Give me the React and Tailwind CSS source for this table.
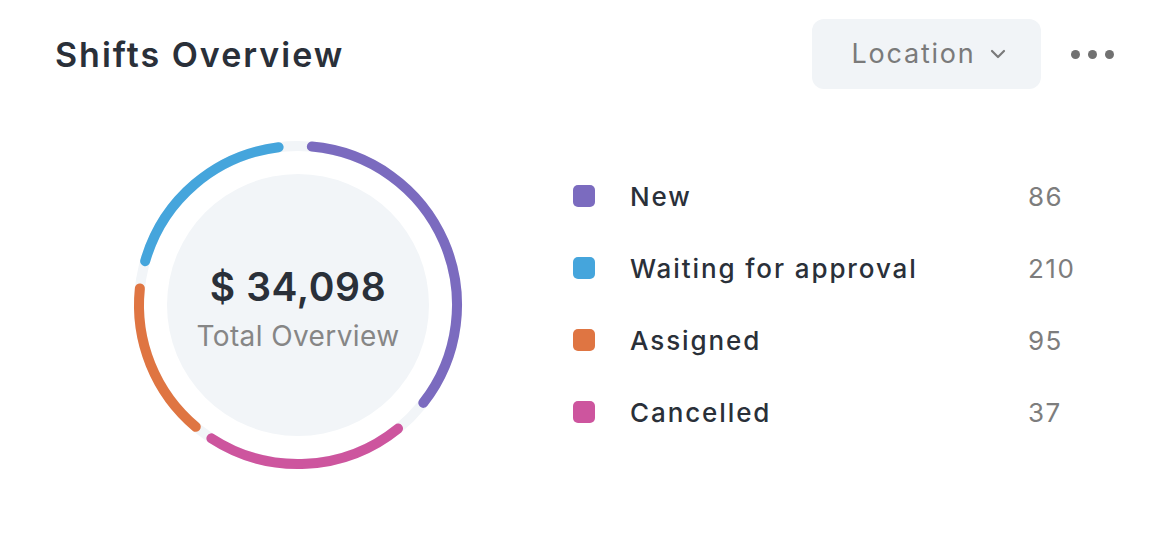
import React from "react";

const segments = [
    { name: "New", value: 86, color: "#7b6bbf", from: 5, to: 128 },
    { name: "Waiting for approval", value: 210, color: "#45a5dc", from: 286, to: 353 },
    { name: "Assigned", value: 95, color: "#df7542", from: 220, to: 276 },
    { name: "Cancelled", value: 37, color: "#cd559e", from: 141, to: 213 },
];

const arcPath = (cx, cy, r, from, to) => {
    const rad = (a) => (a * Math.PI) / 180;
    const x1 = cx + r * Math.sin(rad(from));
    const y1 = cy - r * Math.cos(rad(from));
    const x2 = cx + r * Math.sin(rad(to));
    const y2 = cy - r * Math.cos(rad(to));
    const large = to - from > 180 ? 1 : 0;
    return `M ${x1} ${y1} A ${r} ${r} 0 ${large} 1 ${x2} ${y2}`;
};

const Donut = () => (
    <div className="relative w-[340px] h-[340px] shrink-0">
        <svg width="340" height="340" viewBox="0 0 340 340">
            <circle cx="170" cy="170" r="159" fill="none" stroke="#f2f5f8" strokeWidth="10" />
            <circle cx="170" cy="170" r="131" fill="#f2f5f8" />
            {segments.map((s) => (
                <path key={s.name} d={arcPath(170, 170, 159, s.from, s.to)} fill="none" stroke={s.color} strokeWidth="10" strokeLinecap="round" />
            ))}
        </svg>
        <div className="absolute inset-0 flex flex-col items-center justify-center">
            <p className="text-[39px] leading-[44px] font-semibold text-[#2a3039] tracking-[0.6px] mt-[8px]">$ 34,098</p>
            <p className="text-[28px] leading-[34px] text-[#868686] mt-[10px] tracking-[0.4px]">Total Overview</p>
        </div>
    </div>
);

export default function App() {
    return (
        <div className="w-full h-[540px] bg-white" style={{ fontFamily: "Inter, 'Noto Sans', sans-serif" }}>
            <div className="flex items-center justify-between pl-[55px] pr-[58px] pt-[19px]">
                <h1 className="text-[34px] font-semibold text-[#2a3039] tracking-[2px]">Shifts Overview</h1>
                <div className="flex items-center gap-[30px]">
                    <button className="h-[70px] w-[229px] rounded-[12px] bg-[#f1f4f7] flex items-center justify-center gap-[14px] pl-[4px] text-[27px] text-[#7a7a7a] tracking-[1.8px]">
                        Location
                        <svg width="16" height="10" viewBox="0 0 16 10" fill="none">
                            <path d="M2 2l6 6 6-6" stroke="#7a7a7a" strokeWidth="2.2" strokeLinecap="round" strokeLinejoin="round" />
                        </svg>
                    </button>
                    <div className="flex items-center gap-[8px]">
                        <span className="w-[9px] h-[9px] rounded-full bg-[#717171]" />
                        <span className="w-[9px] h-[9px] rounded-full bg-[#717171]" />
                        <span className="w-[9px] h-[9px] rounded-full bg-[#717171]" />
                    </div>
                </div>
            </div>
            <div className="flex items-start pl-[128px] pt-[46px]">
                <Donut />
                <div className="ml-[105px] mt-[45px] flex flex-col gap-[40px]">
                    {segments.map((s) => (
                        <div key={s.name} className="flex items-center h-[32px]">
                            <span className="w-[22px] h-[22px] rounded-[5px]" style={{ backgroundColor: s.color }} />
                            <span className="ml-[35px] w-[398px] text-[26px] font-medium text-[#2a3039] tracking-[1.9px]">{s.name}</span>
                            <span className="text-[26px] text-[#7d7d7d] tracking-[1.5px]">{s.value}</span>
                        </div>
                    ))}
                </div>
            </div>
        </div>
    );
}
